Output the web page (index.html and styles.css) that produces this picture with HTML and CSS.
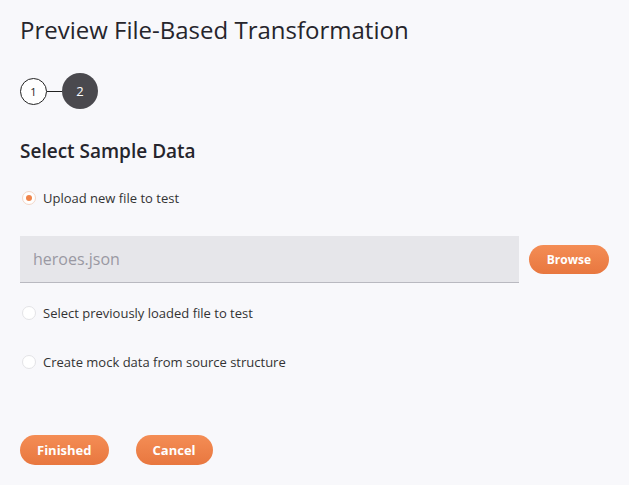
FILE: index.html
```html
<!DOCTYPE html>
<html lang="en">

<head>
    <meta charset="UTF-8">
    <meta name="viewport" content="width=device-width, initial-scale=1.0">
    <title>Preview File-Based Transformation</title>
    <link rel="stylesheet" href="styles.css">
</head>

<body>
    <div id="page">
        <h1 class="title">Preview File-Based Transformation</h1>

        <!-- steps -->
        <div class="steps">
            <div class="step step-done">1</div>
            <div class="step-line"></div>
            <div class="step step-active">2</div>
        </div>

        <h2 class="section-title">Select Sample Data</h2>

        <label class="radio-row first">
            <span class="radio checked"></span>
            <span>Upload new file to test</span>
        </label>

        <div class="file-row">
            <div class="file-input">heroes.json</div>
            <button class="btn btn-small">Browse</button>
        </div>

        <label class="radio-row second">
            <span class="radio"></span>
            <span>Select previously loaded file to test</span>
        </label>

        <label class="radio-row">
            <span class="radio"></span>
            <span>Create mock data from source structure</span>
        </label>

        <div class="actions">
            <button class="btn">Finished</button>
            <button class="btn">Cancel</button>
        </div>
    </div>
</body>

</html>
```

FILE: styles.css
```css
* {
    margin: 0;
    padding: 0;
    box-sizing: border-box;
}

body {
    background-color: #f8f8fb;
    font-family: "Open Sans", "Liberation Sans", sans-serif;
    color: #2b2a33;
}

#page {
    padding: 14px 20px 20px 20px;
}

.title {
    font-size: 24px;
    font-weight: 400;
    line-height: 32px;
    color: #26252c;
}

.steps {
    display: flex;
    align-items: center;
    margin-top: 27px;
    height: 36px;
}

.step {
    border-radius: 50%;
    display: flex;
    align-items: center;
    justify-content: center;
    font-size: 11px;
}

.step-done {
    width: 27px;
    height: 27px;
    border: 1px solid #222;
    background-color: #fff;
    color: #222;
}

.step-line {
    width: 15px;
    height: 1px;
    background-color: #222;
}

.step-active {
    width: 36px;
    height: 36px;
    background-color: #4a494e;
    color: #fff;
    font-size: 13px;
}

.section-title {
    font-size: 19px;
    font-weight: 600;
    line-height: 24px;
    margin-top: 30px;
    color: #26252c;
}

.radio-row {
    display: flex;
    align-items: center;
    gap: 7px;
    font-size: 13px;
    line-height: 18px;
    margin-top: 31px;
    padding-left: 2px;
    color: #333;
}

.radio-row.first {
    margin-top: 26px;
}

.radio-row.second {
    margin-top: 21px;
}

.radio {
    width: 14px;
    height: 14px;
    border-radius: 50%;
    border: 1px solid #e3e3e6;
    background-color: #fff;
    display: flex;
    align-items: center;
    justify-content: center;
}

.radio.checked {
    border-color: #f3d6c6;
}

.radio.checked::after {
    content: "";
    width: 6px;
    height: 6px;
    border-radius: 50%;
    background-color: #f0844a;
}

.file-row {
    display: flex;
    align-items: center;
    gap: 10px;
    margin-top: 29px;
}

.file-input {
    width: 500px;
    height: 47px;
    background-color: #e6e6ea;
    border-bottom: 1px solid #b9b9c0;
    font-size: 16px;
    color: #9a99a3;
    padding: 0 13px;
    line-height: 46px;
}

.btn {
    border: none;
    border-radius: 15px;
    background: linear-gradient(#f48d55, #e8773f);
    color: #fff;
    font-family: "Open Sans", "Liberation Sans", sans-serif;
    font-weight: 700;
    font-size: 13px;
    height: 30px;
    padding: 0 17px;
}

.btn-small {
    font-size: 12px;
    height: 29px;
    padding: 0 18px;
}

.actions {
    display: flex;
    gap: 27px;
    margin-top: 64px;
}
```
